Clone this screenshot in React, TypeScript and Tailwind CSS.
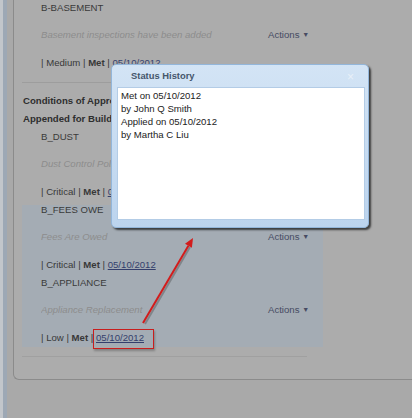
import React from "react";

interface Condition {
  code: string;
  desc: string;
  severity: string;
  status: string;
  date: string;
  boxed?: boolean;
}

const first: Condition[] = [
  { code: "B-BASEMENT", desc: "Basement inspections have been added", severity: "Medium", status: "Met", date: "05/10/2012" },
];

const appended: Condition[] = [
  { code: "B_DUST", desc: "Dust Control Policy", severity: "Critical", status: "Met", date: "05/10/2012" },
];

const highlighted: Condition[] = [
  { code: "B_FEES OWE", desc: "Fees Are Owed", severity: "Critical", status: "Met", date: "05/10/2012" },
  { code: "B_APPLIANCE", desc: "Appliance Replacement", severity: "Low", status: "Met", date: "05/10/2012", boxed: true },
];

function ConditionRow({ c }: { c: Condition }) {
  return (
    <div className="pl-[19px] flex flex-col">
      <div className="leading-[10px] h-[10px] whitespace-nowrap text-[#3a3a3a]">{c.code}</div>
      <div className="mt-[13px] leading-[18px] flex whitespace-nowrap">
        <span className="w-[227px] overflow-hidden italic text-[#8d8d8d]">{c.desc}</span>
        <span className="text-[#464b62]">
          Actions <span className="text-[7px] align-[1px]">▼</span>
        </span>
      </div>
      <div className="mt-[10px] leading-[18px] h-[18px] whitespace-nowrap text-[#383838]">
        | {c.severity} | <span className="font-bold">{c.status}</span> |{" "}
        <span className="relative inline-block leading-[18px]">
          <span className="underline text-[#343f6c]">{c.date}</span>
          {c.boxed && (
            <span className="absolute -left-[3px] -right-[10px] -top-[0px] -bottom-[2px] border-[1.5px] border-[#c81e1e] shadow-[1px_2px_2px_rgba(0,0,0,0.25)]" />
          )}
        </span>
      </div>
    </div>
  );
}

export default function App() {
  return (
    <div className="relative w-[412px] h-[418px] overflow-hidden bg-[#a9a9a9] flex font-['Liberation_Sans',Arial,sans-serif] text-[9.6px]">
      {/* left frame strip */}
      <div className="w-[3px] bg-[#c2c6cb]" />
      <div className="w-[4px] bg-[#9da8b5]" />

      <div className="flex-1 pl-[6px]">
        <div className="h-[380px] border-l border-b border-[#8b8b8b] rounded-bl-[6px] bg-[#acacac] pl-[8px] pt-[3px] flex flex-col">
          {first.map((c) => (
            <ConditionRow key={c.code} c={c} />
          ))}

          <div className="mt-[10px] w-[285px] border-t border-[#9d9d9d]" />

          <div className="mt-[9px] pl-[1px] font-bold leading-[18px] text-[#2e2e2e] whitespace-nowrap">
            <div>Conditions of Approval</div>
            <div>Appended for Building Permit</div>
          </div>

          <div className="mt-[4px] flex flex-col gap-[4px]">
            {appended.map((c) => (
              <ConditionRow key={c.code} c={c} />
            ))}
            <div className="w-[301px] bg-[#a4acb4] flex flex-col gap-[4px]">
              {highlighted.map((c) => (
                <ConditionRow key={c.code} c={c} />
              ))}
            </div>
          </div>

          <div className="mt-[9px] w-[285px] border-t border-[#a0a0a0]" />
        </div>
      </div>

      {/* Status History dialog */}
      <div className="absolute left-[111px] top-[64px] w-[258px] h-[164px] rounded-[5px] border border-[#93b6da] bg-gradient-to-b from-[#d3e4f5] to-[#bcd4ee] shadow-[2px_2px_2px_rgba(0,0,0,0.65)] flex flex-col">
        <div className="relative h-[22px] flex items-center pl-[19px]">
          <span className="font-bold text-[9.4px] text-[#45566b]">Status History</span>
          <span className="absolute right-[14px] top-[3px] text-[12px] text-[#e8f0f8]">×</span>
        </div>
        <div className="ml-[5px] mr-[3px] h-[133px] bg-white border border-[#b3cce6] pl-[3px] pt-[1px] leading-[13px] text-[#222]">
          <div>Met on 05/10/2012</div>
          <div>by John Q Smith</div>
          <div>Applied on 05/10/2012</div>
          <div>by Martha C Liu</div>
        </div>
      </div>

      {/* red annotation arrow */}
      <svg className="absolute inset-0 pointer-events-none" width="412" height="418" viewBox="0 0 412 418">
        <line x1="145" y1="324" x2="190" y2="247" stroke="rgba(60,60,60,0.35)" strokeWidth="2" />
        <line x1="143" y1="323" x2="188.4" y2="245.8" stroke="#d21c1c" strokeWidth="2" />
        <polygon points="193,238 191.9,247.8 185,243.8" fill="#d21c1c" />
      </svg>
    </div>
  );
}
